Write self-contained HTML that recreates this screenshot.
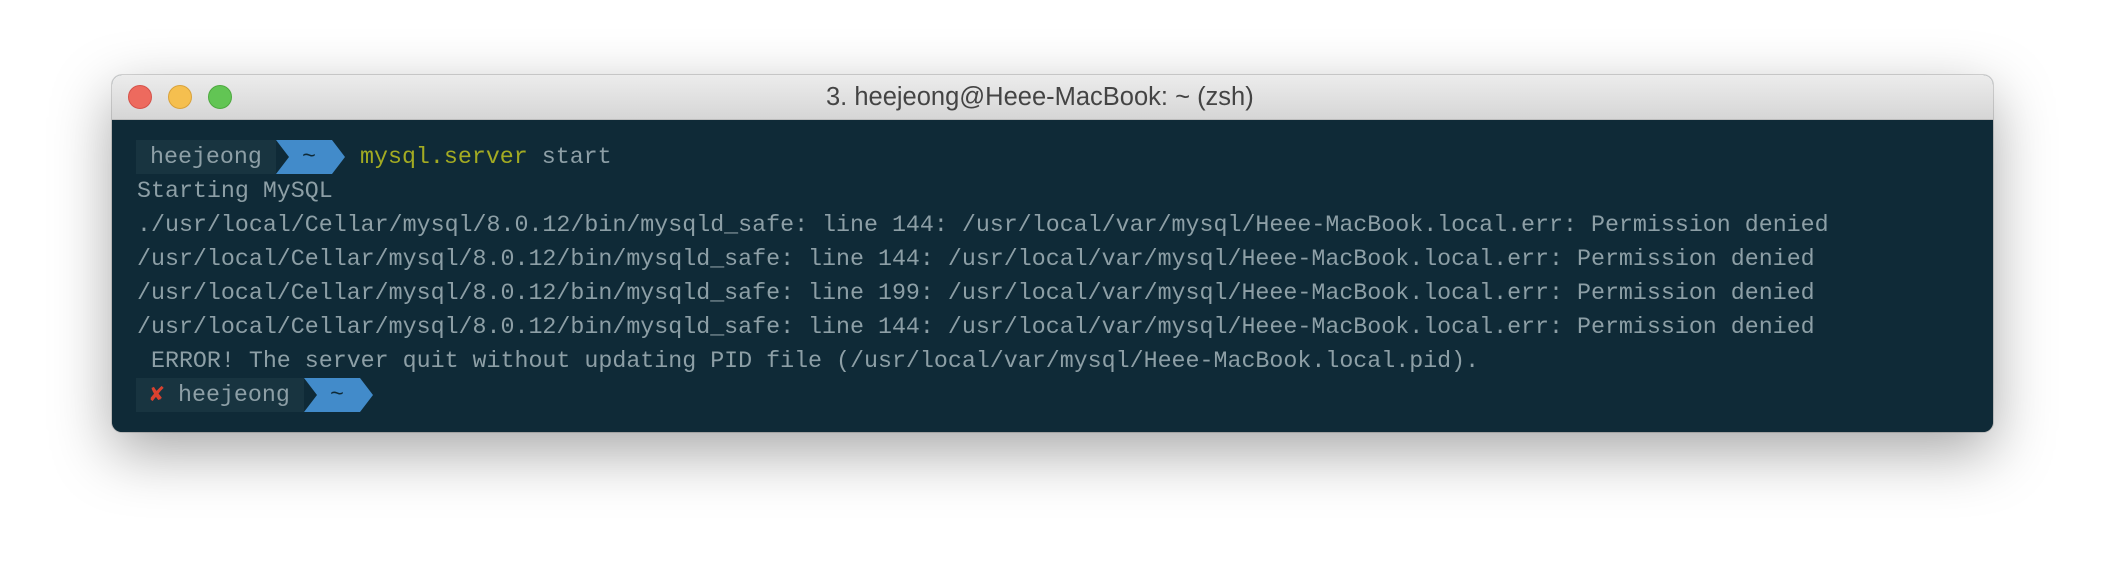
<!DOCTYPE html>
<html><head><style>
body{margin:0;width:2106px;height:580px;background:#fff;overflow:hidden;position:relative;font-family:"Liberation Mono",monospace}
.win{position:absolute;left:112px;top:75px;width:1881px;height:357px;border-radius:10px;overflow:hidden;box-shadow:0 20px 60px rgba(0,0,0,0.35),0 0 0 1px rgba(0,0,0,0.15);background:#0f2a37}
.tb{height:44px;background:linear-gradient(#ececec,#d6d6d6);border-bottom:1px solid #bdbdbd;position:relative;font-family:"Liberation Sans",sans-serif;font-size:25.5px;color:#444;line-height:44px}
.title{position:absolute;left:714px;top:0;white-space:nowrap}
.dot{position:absolute;top:10px;width:24px;height:24px;border-radius:50%}
.term{position:absolute;left:0;top:45px;right:0;bottom:0;background:#0f2a37;color:#8d9fa6;font-size:23.3px}
.l{position:absolute;left:25px;height:34px;line-height:34px;white-space:pre}
.band{position:absolute;height:34px;background:#183440}
</style></head><body>
<div class="win">
<div class="tb"><span class="title">3. heejeong@Heee-MacBook: ~ (zsh)</span>
<div class="dot" style="left:16px;background:#ed6a5e;border:1px solid #d5524a;box-sizing:border-box"></div>
<div class="dot" style="left:56px;background:#f5bf4f;border:1px solid #d9a23b;box-sizing:border-box"></div>
<div class="dot" style="left:96px;background:#62c554;border:1px solid #4ea940;box-sizing:border-box"></div>
</div>
<div class="term">
<div class="band" style="left:24px;top:20px;width:140px"></div>
<svg style="position:absolute;left:164px;top:20px" width="70" height="34"><polygon points="0,0 56,0 69,17 56,34 0,34 13,17" fill="#428bca"/></svg>
<div class="l" style="top:20px;left:38px">heejeong</div>
<div class="l" style="top:20px;left:190px;color:#0f2a37">~</div>
<div class="l" style="top:20px;left:248px"><span style="color:#a3ab22">mysql.server</span> start</div>
<div class="l" style="top:54px">Starting MySQL</div>
<div class="l" style="top:88px">./usr/local/Cellar/mysql/8.0.12/bin/mysqld_safe: line 144: /usr/local/var/mysql/Heee-MacBook.local.err: Permission denied</div>
<div class="l" style="top:122px">/usr/local/Cellar/mysql/8.0.12/bin/mysqld_safe: line 144: /usr/local/var/mysql/Heee-MacBook.local.err: Permission denied</div>
<div class="l" style="top:156px">/usr/local/Cellar/mysql/8.0.12/bin/mysqld_safe: line 199: /usr/local/var/mysql/Heee-MacBook.local.err: Permission denied</div>
<div class="l" style="top:190px">/usr/local/Cellar/mysql/8.0.12/bin/mysqld_safe: line 144: /usr/local/var/mysql/Heee-MacBook.local.err: Permission denied</div>
<div class="l" style="top:224px"> ERROR! The server quit without updating PID file (/usr/local/var/mysql/Heee-MacBook.local.pid).</div>
<div class="band" style="left:24px;top:258px;width:168px"></div>
<svg style="position:absolute;left:192px;top:258px" width="70" height="34"><polygon points="0,0 56,0 69,17 56,34 0,34 13,17" fill="#428bca"/></svg>
<div class="l" style="top:258px;left:38px"><span style="color:#d9412f;font-weight:bold">✘</span> heejeong</div>
<div class="l" style="top:258px;left:218px;color:#0f2a37">~</div>
</div>
</div>
</body></html>
